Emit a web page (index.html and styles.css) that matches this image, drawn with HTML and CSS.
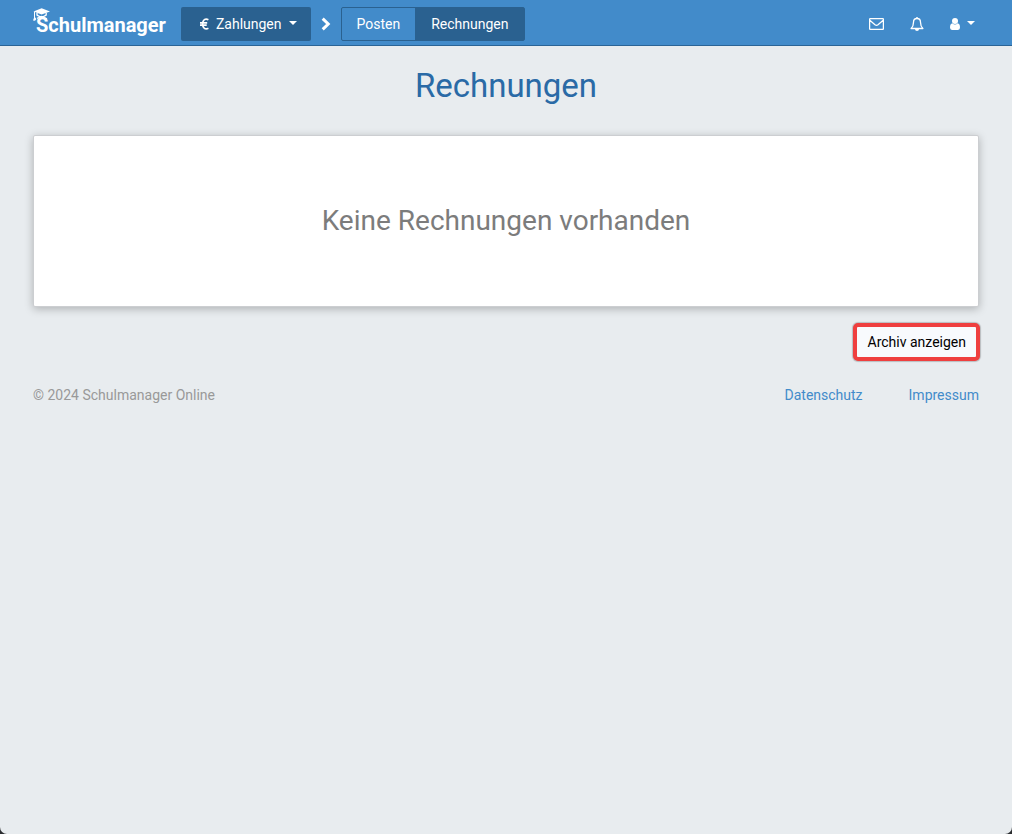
FILE: index.html
```html
<!DOCTYPE html>
<html lang="de">
<head>
<meta charset="utf-8">
<meta name="viewport" content="width=device-width, initial-scale=1">
<title>Rechnungen – Schulmanager Online</title>
<link rel="stylesheet" href="styles.css">
</head>
<body>
<div class="page">
  <header class="navbar">
    <a class="brand" href="#">
      <svg class="brand-cap" width="18" height="14" viewBox="0 0 18 14" aria-hidden="true">
        <path d="M0.5 3.6 8.6 0.3 17 3.6 8.6 6.6z" fill="#fff"/>
        <path d="M4 4.8v2.6M13.2 4.8v2.6" stroke="#fff" stroke-width="1.3" fill="none"/>
        <path d="M4 7.2 8.6 9.6 13.2 7.2M4 10.4 8.6 8.4 14 10.8" stroke="#fff" stroke-width="1.3" fill="none"/>
        <path d="M1.5 4V10" stroke="#fff" stroke-width="1"/>
        <path d="M1.5 8.6 0 12.4 2 12.8 3.4 11z" fill="#fff"/>
      </svg>
      <span>Schulmanager</span>
    </a>
    <button class="nav-btn module-btn" type="button">
      <svg width="9" height="12" viewBox="0 0 9 12" aria-hidden="true"><path d="M8.4 1.7C5.4.1 2.6 1.8 2.6 6s2.8 5.9 5.8 4.3M0 4.8h7.2M0 7.2h6.7" fill="none" stroke="#fff" stroke-width="1.7"/></svg>
      <span>Zahlungen</span>
      <svg class="caret" width="8" height="4" viewBox="0 0 8 4" aria-hidden="true"><path d="M0 0h8L4 4z" fill="#fff"/></svg>
    </button>
    <svg class="chevron" width="10" height="14" viewBox="0 0 10 14" aria-hidden="true"><path d="M1.7 1.7 7.2 7 1.7 12.3" fill="none" stroke="#fff" stroke-width="3"/></svg>
    <nav class="tabs" aria-label="Zahlungen">
      <a class="tab" href="#">Posten</a>
      <a class="tab active" href="#" aria-current="page">Rechnungen</a>
    </nav>
    <div class="tools">
      <button class="icon-btn" type="button" aria-label="Nachrichten">
        <svg width="15" height="12" viewBox="0 0 15 12" aria-hidden="true"><path d="M1.6.6h11.8q1 0 1 1v8.8q0 1-1 1H1.6q-1 0-1-1V1.6q0-1 1-1zM.8 2.2 6 6.7q1.5 1.2 3 0l5.2-4.5" fill="none" stroke="#fff" stroke-width="1.3"/></svg>
      </button>
      <button class="icon-btn" type="button" aria-label="Benachrichtigungen">
        <svg width="14" height="14" viewBox="0 0 14 14" aria-hidden="true"><path d="M7 1.5C4.5 1.5 3.5 3.3 3.5 5.3c0 3-.8 4.8-2.4 6.2h11.8c-1.6-1.4-2.4-3.2-2.4-6.2 0-2-1-3.8-3.5-3.8z" fill="none" stroke="#fff" stroke-width="1.3" stroke-linejoin="round"/><path d="M5 12h4a2 2 0 0 1-4 0zM6.3 0h1.4v1.8H6.3z" fill="#fff"/></svg>
      </button>
      <button class="icon-btn user-btn" type="button" aria-label="Benutzerkonto">
        <svg width="10" height="12" viewBox="0 0 10 12" aria-hidden="true"><circle cx="5" cy="3.1" r="3" fill="#fff"/><path d="M2.4 5.2Q5 7.6 7.6 5.2 10 5.6 10 9.6 10 12 8 12H2Q0 12 0 9.6 0 5.6 2.4 5.2z" fill="#fff"/></svg>
        <svg class="caret" width="8" height="4" viewBox="0 0 8 4" aria-hidden="true"><path d="M0 0h8L4 4z" fill="#fff"/></svg>
      </button>
    </div>
  </header>
  <main class="content">
    <h1 class="title">Rechnungen</h1>
    <section class="panel">
      <p class="empty">Keine Rechnungen vorhanden</p>
    </section>
    <div class="actions">
      <button class="archive-btn" type="button">Archiv anzeigen</button>
    </div>
  </main>
  <footer class="footer">
    <span>© 2024 Schulmanager Online</span>
    <nav class="legal" aria-label="Rechtliches">
      <a href="#">Datenschutz</a>
      <a href="#">Impressum</a>
    </nav>
  </footer>
</div>
</body>
</html>
```
FILE: styles.css
```css
* {
  box-sizing: border-box;
}

html {
  background: #2b2d30;
}

body {
  margin: 0;
  font: 14px/20px Roboto, sans-serif;
  color: #000;
}

button {
  font: inherit;
  cursor: pointer;
}

a {
  color: #428bca;
  text-decoration: none;
}

svg {
  display: block;
  flex: none;
}

.page {
  min-height: 100vh;
  background: #e8ecef;
  border-radius: 0 0 7px 7px;
}

.navbar {
  display: flex;
  align-items: center;
  padding: 7px 33px 4px;
  background: #428bca;
  border-bottom: 1px solid #2a6496;
}

.brand {
  position: relative;
  padding: 2px 0 0 3px;
  margin-right: 15px;
  color: #fff;
  font-size: 20px;
  font-weight: 700;
  line-height: 24px;
}

.brand-cap {
  position: absolute;
  left: 0;
  top: -3px;
}

.nav-btn {
  display: flex;
  align-items: center;
  gap: 7px;
  height: 34px;
  padding: 0 14px 0 19px;
  border: 0;
  border-radius: 2px;
  background: #2a6190;
  color: #fff;
}

.caret {
  margin-top: -2px;
}

.chevron {
  margin: 0 10px;
}

.tabs {
  display: flex;
  border: 1px solid #2a6190;
  border-radius: 2px;
}

.tab {
  padding: 6px 15px;
  color: #fff;
}

.tab.active {
  padding-left: 16px;
  background: #2a6190;
}

.tools {
  display: flex;
  align-items: center;
  gap: 26px;
  margin-left: auto;
  padding-right: 4px;
}

.icon-btn {
  display: flex;
  align-items: center;
  gap: 7px;
  padding: 0;
  border: 0;
  background: none;
}

.content {
  padding: 20px 33px 0;
}

.title {
  margin: 0 0 29px;
  color: #2a6aa6;
  font-size: 33px;
  font-weight: 400;
  line-height: 40px;
  text-align: center;
}

.panel {
  padding: 65px 20px;
  background: #fff;
  border: 1px solid #ccced1;
  border-radius: 2px;
  box-shadow: 0 2px 8px rgba(0, 0, 0, 0.25);
}

.empty {
  margin: 0;
  color: #7c7c7c;
  font-size: 28px;
  line-height: 40px;
  text-align: center;
}

.actions {
  display: flex;
  justify-content: flex-end;
  margin: 16px -1px 0;
}

.archive-btn {
  padding: 5px 10px 5px 11px;
  border: 4px solid #ef3f3f;
  border-radius: 5px;
  background: #f8fafd;
  color: #000;
  box-shadow: 0 0 1px 1px rgba(0, 0, 0, 0.2);
}

.footer {
  display: flex;
  justify-content: space-between;
  padding: 24px 33px;
  color: #999;
}

.legal {
  display: flex;
  gap: 46px;
}
```
